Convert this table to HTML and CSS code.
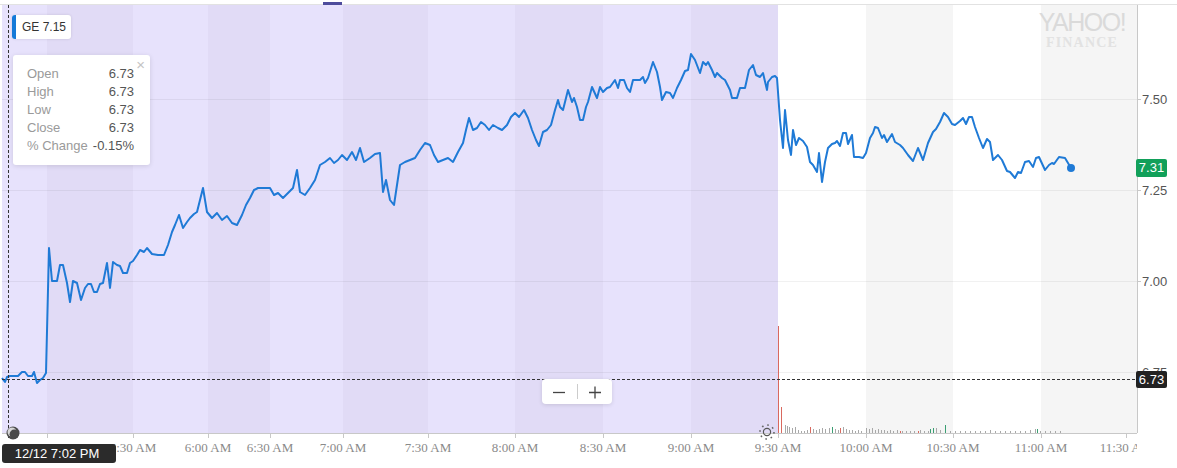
FILE: index.html
```html
<!DOCTYPE html>
<html>
<head>
<meta charset="utf-8">
<link rel="stylesheet" href="styles.css">
</head>
<body>
<div class="chart">
  <svg class="plot" width="1177" height="468" viewBox="0 0 1177 468">
    <defs>
      <clipPath id="axisclip"><rect x="0" y="436" width="1137" height="32"/></clipPath>
    </defs>
    <line class="topline" x1="0" y1="4.5" x2="1177" y2="4.5"/>
    <rect class="topmark" x="323" y="2" width="19" height="3"/>
    <!-- bands -->
    <rect class="b-light" x="2" y="5" width="45" height="428"/>
    <rect class="b-dark" x="47" y="5" width="86" height="428"/>
    <rect class="b-light" x="133" y="5" width="75" height="428"/>
    <rect class="b-dark" x="208" y="5" width="62" height="428"/>
    <rect class="b-light" x="270" y="5" width="73" height="428"/>
    <rect class="b-dark" x="343" y="5" width="85" height="428"/>
    <rect class="b-light" x="428" y="5" width="87" height="428"/>
    <rect class="b-dark" x="515" y="5" width="88" height="428"/>
    <rect class="b-light" x="603" y="5" width="88" height="428"/>
    <rect class="b-dark" x="691" y="5" width="87" height="428"/>
    <rect class="b-gray" x="866" y="5" width="87" height="428"/>
    <rect class="b-gray" x="1041" y="5" width="96" height="428"/>
    <!-- grid -->
    <path class="grid" d="M2 99.5H1137M2 190.5H1137M2 281.5H1137M2 372.5H1137"/>
    <!-- axes -->
    <path class="axis" d="M2 433.5H1137M1137.5 5V433"/>
    <path class="axis" d="M47.5 433v5M133.5 433v5M208.5 433v5M270.5 433v5M343.5 433v5M428.5 433v5M515.5 433v5M603.5 433v5M691.5 433v5M778.5 433v5M866.5 433v5M953.5 433v5M1041.5 433v5M1126.5 433v5"/>
    <path class="axis" d="M1137 99.5h4M1137 190.5h4M1137 281.5h4M1137 372.5h4"/>
    <!-- volume -->
    <path class="vol-red" d="M778.5 433V326M781.5 433V407M810.5 433v-6M840.5 433v-5M900.5 433v-2M918.5 433v-2"/>
    <path class="vol-green" d="M832.5 433v-6M930.5 433v-4M933.5 433v-5M945.5 433v-8M1037.5 433v-4"/>
    <path class="vol-gray" d="M785.5 433v-8M787.5 433v-7M789.5 433v-6M792.5 433v-5M795.5 433v-6M798.5 433v-3M801.5 433v-2M804.5 433v-2M807.5 433v-3M813.5 433v-4M816.5 433v-3M819.5 433v-4M822.5 433v-5M825.5 433v-4M829.5 433v-5M835.5 433v-4M838.5 433v-3M843.5 433v-6M846.5 433v-4M849.5 433v-3M852.5 433v-3M855.5 433v-2M858.5 433v-3M861.5 433v-2M866.5 433v-5M869.5 433v-4M872.5 433v-5M875.5 433v-3M878.5 433v-4M881.5 433v-3M884.5 433v-3M887.5 433v-2M890.5 433v-3M893.5 433v-2M897.5 433v-3M902.5 433v-2M906.5 433v-2M910.5 433v-2M914.5 433v-2M920.5 433v-3M924.5 433v-2M928.5 433v-2M936.5 433v-5M940.5 433v-3M950.5 433v-2M955.5 433v-2M960.5 433v-2M965.5 433v-2M970.5 433v-2M975.5 433v-2M980.5 433v-2M985.5 433v-2M990.5 433v-3M995.5 433v-2M1000.5 433v-2M1005.5 433v-2M1010.5 433v-2M1015.5 433v-2M1020.5 433v-2M1025.5 433v-2M1030.5 433v-3M1035.5 433v-4M1040.5 433v-2M1045.5 433v-2M1050.5 433v-2M1055.5 433v-2M1060.5 433v-2"/>
    <!-- price line -->
    <polyline class="price" points="2,378 5,382 7,377 10,376 18,376 22,372 25,372 28,376 32,376 34,372 37,383 40,380 43,378 46,373 49,248 52,281 57,281 60,265 63,265 67,283 70,302 73,281 77,283 81,300 85,288 88,284 91,284 94,292 97,292 100,284 103,283 107,263 110,288 113,262 117,265 120,266 123,273 127,273 130,263 133,261 137,255 140,250 144,252 147,248 152,254 158,255 164,255 168,245 172,232 175,225 179,215 183,228 187,222 190,218 194,214 197,212 200,200 203,188 207,212 212,218 217,213 222,220 227,216 232,223 237,225 242,215 246,205 250,198 254,190 258,188 265,188 270,188 274,195 278,193 283,198 288,193 293,188 297,170 300,192 305,195 310,188 315,180 320,165 325,162 330,158 334,163 338,160 342,155 347,160 352,152 356,160 360,148 364,162 370,158 375,154 380,153 383,192 386,180 390,200 394,205 397,185 400,165 405,162 410,160 415,158 420,150 425,143 430,145 434,155 438,162 443,160 448,158 453,162 458,152 463,143 466,130 469,118 473,130 477,128 481,122 485,125 489,130 493,125 498,128 502,130 507,125 511,117 515,113 519,117 524,110 528,118 532,130 536,140 539,146 543,132 547,130 551,125 555,110 558,100 560,107 563,110 568,90 572,102 574,98 577,107 580,120 583,120 586,107 588,102 592,87 597,98 600,87 603,92 607,88 610,87 615,80 618,88 620,80 624,80 627,88 630,92 633,80 640,80 643,77 645,83 648,78 653,62 657,72 660,87 662,100 666,92 670,93 673,98 677,88 681,80 685,71 688,70 691,54 695,60 700,73 703,62 706,65 708,62 712,70 715,77 717,73 722,78 725,80 730,90 732,98 737,98 740,88 745,88 749,70 753,65 756,75 760,77 763,73 767,90 768,82 772,77 775,76 777,78 780,120 783,148 785,110 788,140 791,155 793,130 796,145 799,138 803,141 807,147 810,162 813,165 817,172 819,153 822,182 825,162 828,148 832,144 835,143 837,141 840,146 843,133 846,133 848,144 852,135 854,157 859,157 863,158 866,153 870,138 873,133 875,127 878,128 882,138 884,135 887,142 892,134 895,142 900,145 903,148 908,155 913,161 918,148 923,160 928,143 933,132 936,129 940,122 944,113 948,117 952,124 955,125 960,121 963,118 966,124 969,117 972,117 975,127 979,138 983,148 987,139 990,142 993,160 998,155 1002,160 1007,171 1010,172 1015,178 1018,172 1021,173 1025,162 1029,161 1033,167 1036,158 1039,157 1045,170 1049,165 1052,163 1054,164 1059,157 1065,158 1068,163 1071,168"/>
    <circle class="dot" cx="1071" cy="168" r="4"/>
    <!-- crosshair -->
    <path class="cross" d="M8.5 5V438M2 379.5H1137"/>
    <!-- y labels -->
    <text class="ylabel" x="1142" y="104">7.50</text>
    <text class="ylabel" x="1142" y="195">7.25</text>
    <text class="ylabel" x="1142" y="286">7.00</text>
    <text class="ylabel" x="1142" y="377">6.75</text>
    <!-- x labels -->
    <g clip-path="url(#axisclip)">
      <text class="xlabel" x="47" y="452">5:00 AM</text>
      <text class="xlabel" x="133" y="452">5:30 AM</text>
      <text class="xlabel" x="208" y="452">6:00 AM</text>
      <text class="xlabel" x="270" y="452">6:30 AM</text>
      <text class="xlabel" x="343" y="452">7:00 AM</text>
      <text class="xlabel" x="428" y="452">7:30 AM</text>
      <text class="xlabel" x="515" y="452">8:00 AM</text>
      <text class="xlabel" x="603" y="452">8:30 AM</text>
      <text class="xlabel" x="691" y="452">9:00 AM</text>
      <text class="xlabel" x="778" y="452">9:30 AM</text>
      <text class="xlabel" x="866" y="452">10:00 AM</text>
      <text class="xlabel" x="953" y="452">10:30 AM</text>
      <text class="xlabel" x="1041" y="452">11:00 AM</text>
      <text class="xlabel" x="1126" y="452">11:30 AM</text>
    </g>
    <!-- moon -->
    <circle cx="13" cy="433" r="6.5" fill="#4a4a4a"/>
    <circle cx="12" cy="432" r="4.5" fill="#d8d8d8"/>
    <circle cx="14.2" cy="434.2" r="4.6" fill="#4a4a4a"/>
    <!-- sun -->
    <circle cx="767" cy="432" r="3.6" fill="none" stroke="#555" stroke-width="1.2"/>
    <circle cx="767" cy="432" r="7" fill="none" stroke="#666" stroke-width="1.6" stroke-dasharray="1.6 3.9"/>
  </svg>

  <div class="ge-tag"><span class="ge-bar"></span><span class="ge-text">GE 7.15</span></div>

  <div class="tooltip">
    <span class="tt-close">×</span>
    <div class="tt-grid">
      <span class="tt-label">Open</span><span class="tt-val">6.73</span>
      <span class="tt-label">High</span><span class="tt-val">6.73</span>
      <span class="tt-label">Low</span><span class="tt-val">6.73</span>
      <span class="tt-label">Close</span><span class="tt-val">6.73</span>
      <span class="tt-label">% Change</span><span class="tt-val">-0.15%</span>
    </div>
  </div>

  <div class="zoomctl">
    <span class="zbtn">
      <svg width="14" height="14" viewBox="0 0 14 14"><path d="M1 7.5H13" stroke="#444" stroke-width="1.3"/></svg>
    </span>
    <span class="zsep"></span>
    <span class="zbtn">
      <svg width="14" height="14" viewBox="0 0 14 14"><path d="M1 7.5H13M7 1.5V13.5" stroke="#444" stroke-width="1.3"/></svg>
    </span>
  </div>

  <div class="ptag ptag-green">7.31</div>
  <div class="ptag ptag-dark">6.73</div>
  <div class="date-tag">12/12 7:02 PM</div>

  <div class="logo">
    <span class="logo-top">YAHOO!</span>
    <span class="logo-bottom">FINANCE</span>
  </div>
</div>
</body>
</html>
```
FILE: styles.css
```css
html, body {
  margin: 0;
  padding: 0;
  background: #fff;
}
body {
  font-family: "Liberation Sans", Arial, sans-serif;
  width: 1177px;
  height: 468px;
  overflow: hidden;
}
.chart {
  position: relative;
  width: 1177px;
  height: 468px;
}
.plot {
  display: block;
}
.topline { stroke: #e2e2e2; stroke-width: 1; }
.topmark { fill: #4e4c9c; }
.b-light { fill: #e7e2fc; }
.b-dark { fill: #e1dbf6; }
.b-gray { fill: #f5f5f5; }
.grid { stroke: #000; stroke-opacity: 0.055; stroke-width: 1; fill: none; }
.axis { stroke: #c8c8c8; stroke-width: 1; fill: none; }
.vol-red { stroke: #d9695f; stroke-width: 1; }
.vol-green { stroke: #3a9e72; stroke-width: 1; }
.vol-gray { stroke: #a8a8a8; stroke-width: 1; }
.price {
  fill: none;
  stroke: #1f7ad6;
  stroke-width: 2;
  stroke-linejoin: round;
}
.dot { fill: #1f7ad6; }
.cross {
  stroke: #333;
  stroke-width: 1;
  stroke-dasharray: 3 2;
  fill: none;
}
.ylabel {
  font-family: "Liberation Sans", Arial, sans-serif;
  font-size: 13px;
  fill: #555;
}
.xlabel {
  font-family: "Liberation Serif", "Times New Roman", serif;
  font-size: 13px;
  fill: #8a8a8a;
  text-anchor: middle;
}

.ge-tag {
  position: absolute;
  left: 12px;
  top: 15px;
  height: 24px;
  display: flex;
  align-items: center;
  background: #fff;
  border-radius: 3px;
  box-shadow: 0 0 3px rgba(0,0,0,0.12);
  overflow: hidden;
}
.ge-bar {
  width: 4px;
  align-self: stretch;
  background: #1479d8;
}
.ge-text {
  font-size: 12px;
  color: #333;
  padding: 0 5px 0 6px;
}

.tooltip {
  position: absolute;
  left: 13px;
  top: 55px;
  width: 137px;
  height: 110px;
  box-sizing: border-box;
  padding: 9px 16px 0 14px;
  background: #fff;
  border-radius: 3px;
  box-shadow: 0 1px 5px rgba(0,0,0,0.12);
}
.tt-close {
  position: absolute;
  right: 5px;
  top: 2px;
  font-size: 15px;
  line-height: 15px;
  color: #c4c4c4;
}
.tt-grid {
  display: grid;
  grid-template-columns: 1fr auto;
  grid-auto-rows: 18px;
  align-items: center;
  font-size: 13px;
}
.tt-label { color: #9a9a9a; }
.tt-val { color: #555; text-align: right; }

.zoomctl {
  position: absolute;
  left: 542px;
  top: 379px;
  width: 70px;
  height: 25px;
  display: flex;
  align-items: center;
  background: #fff;
  border-radius: 4px;
  box-shadow: 0 1px 4px rgba(0,0,0,0.12);
}
.zbtn {
  flex: 1;
  display: flex;
  justify-content: center;
  align-items: center;
}
.zbtn svg { display: block; }
.zsep {
  width: 1px;
  height: 15px;
  background: #ccc;
}

.ptag {
  position: absolute;
  left: 1136px;
  width: 31px;
  height: 18px;
  line-height: 18px;
  border-radius: 2px;
  color: #fff;
  font-size: 13px;
  text-align: center;
}
.ptag-green {
  top: 159px;
  background: #12a05a;
}
.ptag-dark {
  top: 371px;
  height: 17px;
  line-height: 17px;
  background: #222;
}
.date-tag {
  position: absolute;
  left: 2px;
  top: 444px;
  width: 114px;
  height: 19px;
  line-height: 19px;
  border-radius: 3px;
  background: #2b2b2b;
  color: #fff;
  font-size: 13px;
  text-align: center;
  box-sizing: border-box;
  padding-right: 4px;
}

.logo {
  position: absolute;
  left: 1036px;
  top: 10px;
  width: 92px;
  display: flex;
  flex-direction: column;
  align-items: center;
}
.logo-top {
  font-size: 25px;
  line-height: 25px;
  letter-spacing: -1.5px;
  color: #dadada;
}
.logo-bottom {
  font-family: "Liberation Serif", "Times New Roman", serif;
  font-weight: bold;
  font-size: 14px;
  line-height: 15px;
  letter-spacing: 1.2px;
  color: #e2e2e2;
}
```
